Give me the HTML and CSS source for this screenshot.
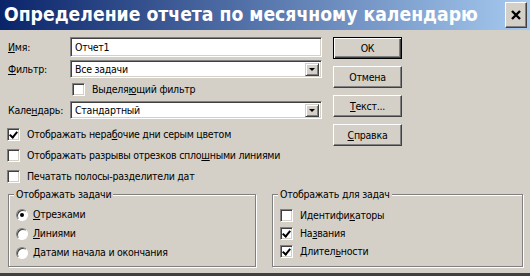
FILE: index.html
```html
<!DOCTYPE html>
<html lang="ru">
<head>
    <meta charset="UTF-8">
    <title>Определение отчета по месячному календарю</title>
    <link rel="stylesheet" href="styles.css">
</head>
<body>
    <div class="window">
        <div class="titlebar">
            <span class="title">Определение отчета по месячному календарю</span>
            <span class="close">
                <svg width="10" height="10" viewBox="0 0 10 10">
                    <path d="M1 1 L9 9 M9 1 L1 9" stroke="#000" stroke-width="2.4" />
                </svg>
            </span>
        </div>

        <div class="content">
            <div class="top">
                <div class="left">
                    <div class="field-row">
                        <span class="label"><u>И</u>мя:</span>
                        <div class="input">Отчет1</div>
                    </div>
                    <div class="field-row row-select">
                        <span class="label"><u>Ф</u>ильтр:</span>
                        <div class="input select">Все задачи<span class="drop"></span></div>
                    </div>
                    <div class="check-row highlight">
                        <span class="box"></span>
                        <span>Выделя<u>ю</u>щий фильтр</span>
                    </div>
                    <div class="field-row row-select">
                        <span class="label">Кале<u>н</u>дарь:</span>
                        <div class="input select">Стандартный<span class="drop"></span></div>
                    </div>

                    <div class="options">
                        <div class="check-row">
                            <span class="box checked"></span>
                            <span>Отображать нера<u>б</u>очие дни серым цветом</span>
                        </div>
                        <div class="check-row">
                            <span class="box"></span>
                            <span>Отображать разрывы отрезков спло<u>ш</u>ными линиями</span>
                        </div>
                        <div class="check-row">
                            <span class="box"></span>
                            <span>Печатать полосы-разделители дат</span>
                        </div>
                    </div>
                </div>

                <div class="buttons">
                    <button class="btn default">ОК</button>
                    <button class="btn">Отмена</button>
                    <button class="btn"><u>Т</u>екст...</button>
                    <button class="btn"><u>С</u>правка</button>
                </div>
            </div>

            <div class="groups">
                <fieldset class="group group-left">
                    <legend>Отображать задачи</legend>
                    <div class="radio-row">
                        <span class="radio on"></span>
                        <span><u>О</u>трезками</span>
                    </div>
                    <div class="radio-row">
                        <span class="radio"></span>
                        <span><u>Л</u>иниями</span>
                    </div>
                    <div class="radio-row">
                        <span class="radio"></span>
                        <span><u>Д</u>атами начала и окончания</span>
                    </div>
                </fieldset>
                <fieldset class="group group-right">
                    <legend>Отображать для задач</legend>
                    <div class="check-row">
                        <span class="box"></span>
                        <span>Идентифи<u>к</u>аторы</span>
                    </div>
                    <div class="check-row">
                        <span class="box checked"></span>
                        <span>На<u>з</u>вания</span>
                    </div>
                    <div class="check-row">
                        <span class="box checked"></span>
                        <span>Длител<u>ь</u>ности</span>
                    </div>
                </fieldset>
            </div>
        </div>
    </div>
</body>
</html>
```

FILE: styles.css
```css
/* Reset */
* {
    margin: 0;
    padding: 0;
    box-sizing: border-box;
}

body {
    font-family: "DejaVu Sans Condensed", "DejaVu Sans", sans-serif;
    font-size: 10.5px;
    letter-spacing: -0.25px;
    line-height: 13px;
    color: #000;
    background-color: #d4d0c8;
}

u {
    text-decoration: underline;
    text-underline-offset: 1px;
}

/* Window frame */
.window {
    width: 530px;
    height: 276px;
    background-color: #d4d0c8;
    border-bottom: 3px solid #404040;
}

.titlebar {
    height: 30px;
    background: linear-gradient(to right, #0a246a, #a6caf0);
    display: flex;
    align-items: center;
    justify-content: space-between;
    padding: 0 3px 0 4px;
}

.title {
    color: #fff;
    font-weight: bold;
    font-size: 19.2px;
    letter-spacing: 0;
    line-height: 24px;
    white-space: nowrap;
}

.close {
    flex-shrink: 0;
    width: 22px;
    height: 26px;
    background-color: #d4d0c8;
    border: 1px solid;
    border-color: #fff #404040 #404040 #fff;
    box-shadow: inset -1px -1px 0 #808080;
    display: flex;
    align-items: center;
    justify-content: center;
}

/* Dialog content */
.content {
    padding: 7px 7px 0 7px;
}

.top {
    display: flex;
    gap: 11px;
}

.left {
    width: 315px;
}

.field-row {
    display: flex;
    align-items: center;
    height: 20px;
    margin-bottom: 3px;
}

.row-select {
    height: 18px;
}

.label {
    width: 63px;
    padding-left: 1px;
}

.input {
    flex: 1;
    height: 100%;
    background-color: #fff;
    border: 1px solid;
    border-color: #808080 #fff #fff #808080;
    box-shadow: inset 1px 1px 0 #404040, inset -1px -1px 0 #d4d0c8;
    padding-left: 4px;
    display: flex;
    align-items: center;
    position: relative;
}

.drop {
    position: absolute;
    right: 2px;
    top: 2px;
    width: 14px;
    height: 13px;
    background-color: #d4d0c8;
    border: 1px solid;
    border-color: #d4d0c8 #404040 #404040 #d4d0c8;
    box-shadow: inset 1px 1px 0 #fff, inset -1px -1px 0 #808080;
}

.drop::after {
    content: "";
    position: absolute;
    left: 3px;
    top: 4px;
    border-left: 3px solid transparent;
    border-right: 3px solid transparent;
    border-top: 3px solid #000;
}

/* Checkboxes */
.check-row {
    display: flex;
    align-items: center;
    gap: 7px;
    height: 13px;
}

.highlight {
    margin: 5px 0 5px 65px;
}

.options {
    display: flex;
    flex-direction: column;
    gap: 8px;
    margin-top: 9px;
}

.box {
    width: 13px;
    height: 13px;
    flex-shrink: 0;
    background-color: #fff;
    border: 1px solid;
    border-color: #808080 #fff #fff #808080;
    box-shadow: inset 1px 1px 0 #404040, inset -1px -1px 0 #d4d0c8;
    position: relative;
}

.box.checked::after {
    content: "";
    position: absolute;
    left: 3px;
    top: 1px;
    width: 3px;
    height: 6px;
    border-right: 2px solid #000;
    border-bottom: 2px solid #000;
    transform: rotate(40deg);
}

/* Buttons */
.buttons {
    display: flex;
    flex-direction: column;
    gap: 7px;
}

.btn {
    width: 69px;
    height: 22px;
    font-family: inherit;
    font-size: 10.5px;
    letter-spacing: -0.25px;
    background-color: #d4d0c8;
    border: 1px solid;
    border-color: #fff #404040 #404040 #fff;
    box-shadow: inset -1px -1px 0 #808080;
}

.btn.default {
    border: 1px solid #000;
    box-shadow: inset 1px 1px 0 #fff, inset -1px -1px 0 #404040, inset -2px -2px 0 #808080;
}

/* Group boxes */
.groups {
    display: flex;
    gap: 16px;
    margin-top: 5px;
    padding-left: 1px;
}

.group {
    height: 79px;
    border: 1px solid #808080;
    box-shadow: 1px 1px 0 #fff, inset 1px 1px 0 #fff;
    padding: 0;
    min-width: 0;
}

.group-left {
    width: 249px;
}

.group-right {
    width: 252px;
}

.group legend {
    margin-left: 5px;
    padding: 0 2px;
    background-color: #d4d0c8;
}

.radio-row {
    display: flex;
    align-items: center;
    gap: 5px;
    height: 13px;
    margin: 6px 0 6px 7px;
}

.radio-row:first-of-type {
    margin-top: 7px;
}

.radio {
    width: 12px;
    height: 12px;
    border-radius: 50%;
    background-color: #fff;
    border: 1px solid;
    border-color: #808080 #fff #fff #808080;
    box-shadow: inset 1px 1px 0 #404040;
    position: relative;
}

.radio.on::after {
    content: "";
    position: absolute;
    left: 3px;
    top: 3px;
    width: 4px;
    height: 4px;
    border-radius: 50%;
    background-color: #000;
}

.group-right .check-row {
    margin: 5px 0 5px 7px;
}

.group-right .check-row:first-of-type {
    margin-top: 8px;
}
```
